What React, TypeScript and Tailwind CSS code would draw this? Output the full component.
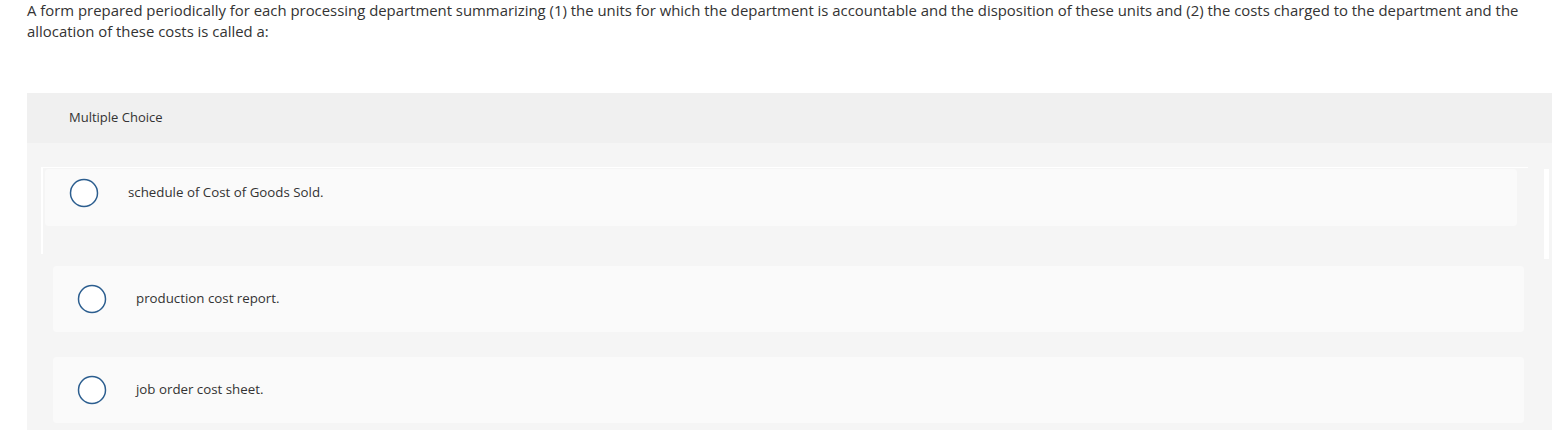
import React from "react";

const options = [
  "schedule of Cost of Goods Sold.",
  "production cost report.",
  "job order cost sheet.",
];

function Radio() {
  return (
    <svg width="30" height="30" viewBox="0 0 30 30" className="shrink-0">
      <circle cx="15" cy="15" r="13.5" fill="#ffffff" stroke="#2c5e8f" strokeWidth="1.5" />
    </svg>
  );
}

function Option({ text, className }: { text: string; className: string }) {
  return (
    <div className={`rounded bg-[#fafafa] pl-[24px] ${className}`}>
      <div className="flex h-[30px] items-center">
        <Radio />
        <span className="ml-[29px] text-[13.3px] text-[#333]">{text}</span>
      </div>
    </div>
  );
}

export default function App() {
  return (
    <div className="min-h-[430px] bg-white font-['Open_Sans','Liberation_Sans',sans-serif] text-[#333]">
      <p className="px-[27px] text-[14.9px] leading-[21px] text-[#333]">
        A form prepared periodically for each processing department summarizing (1) the units for which the department is accountable and the disposition of these units and (2) the costs charged to the department and the allocation of these costs is called a:
      </p>

      <div className="mt-[51px] ml-[27px] mr-[4px] bg-[#f5f5f5]">
        <div className="flex h-[50px] items-center bg-[#f0f0f0] pl-[42px] text-[13px]">Multiple Choice</div>

        <div className="relative pt-[24px] pb-[7px] pl-[26px] pr-[28px]">
          {/* first option, mid-transition with its white outline */}
          <div className="ml-[-12px] mr-[-4px] h-[87px] border-l-2 border-t border-white pl-[2px] pt-[1px]">
            <Option text={options[0]} className="h-[57px] w-[1472px] pt-[9px]" />
          </div>
          <div className="absolute right-[3px] top-[26px] h-[90px] w-[5px] bg-white" />

          <div className="mt-[12px] flex flex-col gap-[25px]">
            <Option text={options[1]} className="flex h-[66px] items-center" />
            <Option text={options[2]} className="flex h-[66px] items-center" />
          </div>
        </div>
      </div>
    </div>
  );
}
